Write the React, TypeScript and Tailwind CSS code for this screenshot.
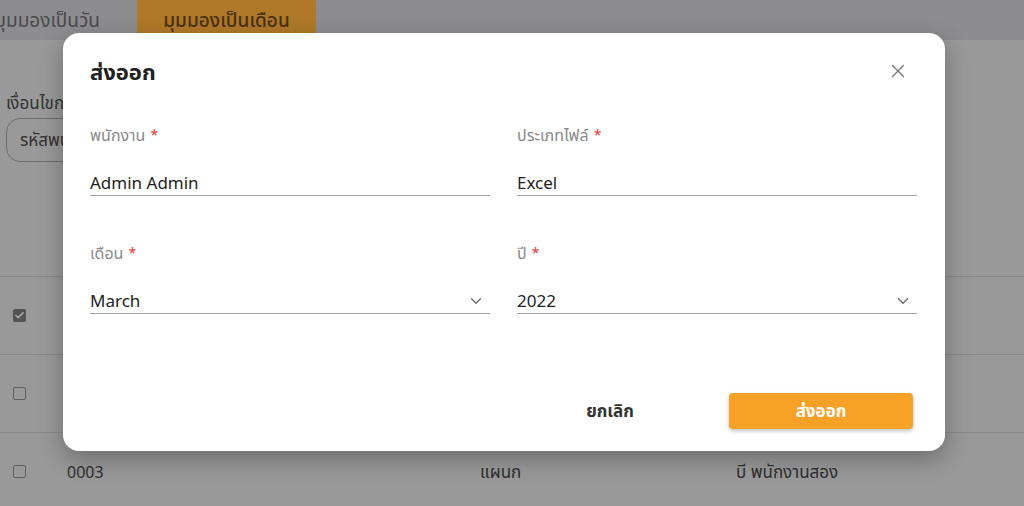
import React from "react";
import { X, ChevronDown, Check } from "lucide-react";

const font = { fontFamily: '"Noto Sans", "Noto Sans Thai", "Open Sans", sans-serif' };

type FieldProps = {
  label: string;
  value: string;
  select?: boolean;
};

const Field: React.FC<FieldProps> = ({ label, value, select }) => {
  return (
    <div className="flex flex-col">
      <label className="flex items-center text-[16px] leading-[20px] text-[#8a8a8a]">
        <span>{label}</span>
        <span className="ml-[5px] text-[14px] text-[#e53935]">*</span>
      </label>
      <div className="mt-[25px] flex items-center justify-between border-b border-[#a3a3a3] h-[26px]">
        <span className="text-[17px] leading-[24px] text-[#222]">{value}</span>
        {select ? <ChevronDown className="mr-[5px] text-[#666]" size={18} strokeWidth={1.6} /> : null}
      </div>
    </div>
  );
};

const Row: React.FC<{ checked?: boolean; code?: string; dept?: string; name?: string }> = ({
  checked,
  code,
  dept,
  name,
}) => (
  <div className="flex h-[78px] items-center border-b border-[#c4c4c4] text-[17px] text-[#444]">
    <div className="w-[67px] pl-[13px]">
      {checked ? (
        <div className="flex h-[13px] w-[13px] items-center justify-center rounded-[2px] bg-[#777]">
          <Check size={11} strokeWidth={3} className="text-white" />
        </div>
      ) : (
        <div className="h-[13px] w-[13px] rounded-[2px] border-[1.5px] border-[#888]" />
      )}
    </div>
    <div className="w-[413px] text-[16px]">{code}</div>
    <div className="w-[256px]">{dept}</div>
    <div>{name}</div>
  </div>
);

export default function App() {
  return (
    <div className="relative h-[506px] w-[1024px] overflow-hidden bg-[#dcdcdc]" style={font}>
      {/* page behind */}
      <div className="flex h-[40px] bg-[#cacace]">
        <div className="flex w-[137px] items-center justify-end pr-[37px] text-[19px] text-[#6a6a6a]">
          <span className="whitespace-nowrap">มุมมองเป็นวัน</span>
        </div>
        <div className="flex w-[179px] items-center justify-center bg-[#fbae3c] text-[19px] font-medium text-[#6e4710]">
          มุมมองเป็นเดือน
        </div>
      </div>
      <div className="px-[6px] pt-[52px]">
        <div className="text-[17px] leading-[22px] text-[#4a4a4a]">เงื่อนไขการค้นหา</div>
        <div className="mt-[4px] flex h-[44px] w-[300px] items-center rounded-[14px] border border-[#9c9c9c] px-[13px] text-[17px] text-[#4a4a4a]">
          รหัสพนักงาน
        </div>
      </div>
      <div className="mt-[114px] border-t border-[#c4c4c4]">
        <Row checked />
        <Row />
        <Row code="0003" dept="แผนก" name="บี พนักงานสอง" />
      </div>

      {/* backdrop + modal */}
      <div className="absolute inset-0 bg-black/30">
        <div className="ml-[63px] mt-[33px] flex h-[418px] w-[882px] flex-col rounded-[16px] bg-white px-[27px] pt-[23px] shadow-[0_8px_24px_rgba(0,0,0,0.3)]">
          <div className="flex items-center justify-between">
            <h2 className="text-[22px] font-bold leading-[30px] text-[#222]">ส่งออก</h2>
            <X className="mr-[9px] text-[#777]" size={22} strokeWidth={1.5} />
          </div>
          <div className="mt-[39px] grid grid-cols-2 gap-x-[27px] gap-y-[47px] pr-[1px]">
            <Field label="พนักงาน" value="Admin Admin" />
            <Field label="ประเภทไฟล์" value="Excel" />
            <Field label="เดือน" value="March" select />
            <Field label="ปี" value="2022" select />
          </div>
          <div className="mt-[79px] flex justify-end gap-[27px] pr-[5px]">
            <button className="h-[36px] w-[184px] text-[17px] font-bold text-[#333]">ยกเลิก</button>
            <button className="h-[36px] w-[184px] rounded-[4px] bg-[#f7a127] text-[17px] font-bold text-white shadow-[0_2px_4px_rgba(0,0,0,0.25)]">
              ส่งออก
            </button>
          </div>
        </div>
      </div>
    </div>
  );
}
